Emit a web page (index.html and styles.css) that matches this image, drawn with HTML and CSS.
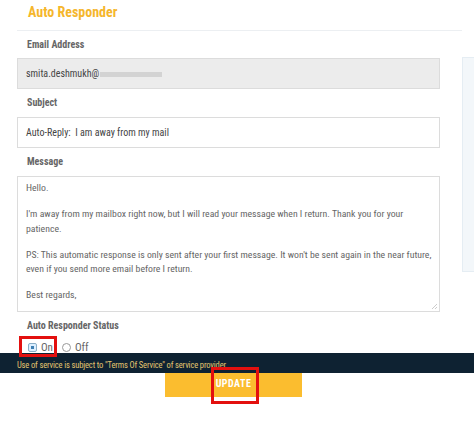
FILE: index.html
```html
<!DOCTYPE html>
<html lang="en">
<head>
    <meta charset="UTF-8">
    <meta name="viewport" content="width=device-width, initial-scale=1.0">
    <title>Auto Responder</title>
    <link rel="stylesheet" href="styles.css">
</head>
<body>
    <div class="page">
        <main class="main-content">
            <h1 class="page-title">Auto Responder</h1>

            <form class="responder-form">
                <div class="field">
                    <label class="field-label">Email Address</label>
                    <div class="text-input readonly">smita.deshmukh@<span class="masked"></span></div>
                </div>

                <div class="field">
                    <label class="field-label">Subject</label>
                    <div class="text-input">Auto-Reply:&nbsp; I am away from my mail</div>
                </div>

                <div class="field">
                    <label class="field-label">Message</label>
                    <div class="text-area">
                        <p>Hello.</p>
                        <p>I'm away from my mailbox right now, but I will read your message when I return. Thank you for your patience.</p>
                        <p>PS: This automatic response is only sent after your first message. It won't be sent again in the near future, even if you send more email before I return.</p>
                        <p>Best regards,</p>
                        <span class="grip"></span>
                    </div>
                </div>

                <div class="field">
                    <label class="field-label">Auto Responder Status</label>
                    <div class="radio-row">
                        <span class="radio checked"></span><span class="radio-text">On</span>
                        <span class="radio"></span><span class="radio-text">Off</span>
                    </div>
                </div>

                <div class="actions">
                    <button type="button" class="update-button">UPDATE</button>
                </div>
            </form>
        </main>
        <aside class="side-panel"></aside>
    </div>

    <footer class="terms-bar">Use of service is subject to "Terms Of Service" of service provider</footer>

    <div class="mark mark-on"></div>
    <div class="mark mark-update"></div>
</body>
</html>
```

FILE: styles.css
```css
body {
    font-family: 'Roboto Condensed', Roboto, 'Liberation Sans', sans-serif;
    font-stretch: condensed;
    margin: 0;
    padding: 0;
    background-color: white;
    color: #555;
    font-size: 10px;
}
.page {
    display: flex;
    align-items: flex-start;
}
.main-content {
    width: 457px;
    padding-left: 17px;
}
.page-title {
    margin: 0;
    height: 30px;
    line-height: 24px;
    padding-left: 11px;
    font-size: 14px;
    font-weight: bold;
    color: #f5b62c;
    border-bottom: 1px solid #eceff2;
}
.responder-form {
    width: 423px;
}
.field-label {
    display: block;
    padding-left: 10px;
    margin: 7px 0;
    line-height: 14px;
    font-weight: bold;
    color: #666;
}
.field:first-child .field-label {
    margin-top: 7px;
    margin-bottom: 6px;
}
.text-input {
    height: 29px;
    line-height: 29px;
    padding: 0 8px;
    border: 1px solid #dcdcdc;
    background-color: white;
    color: #444;
}
.text-input.readonly {
    background-color: #ececec;
}
.masked {
    display: inline-block;
    width: 62px;
    height: 5px;
    margin-left: 1px;
    background-color: #d3d3d3;
    vertical-align: middle;
}
.text-area {
    position: relative;
    height: 124px;
    padding: 4px 3px 6px 8px;
    border: 1px solid #dcdcdc;
    color: #666;
    font-size: 9.75px;
    line-height: 14.5px;
}
.text-area p {
    margin: 0 0 11.5px;
}
.grip {
    position: absolute;
    right: 2px;
    bottom: 2px;
    width: 6px;
    height: 6px;
    background: linear-gradient(135deg, transparent 50%, #ccc 50%, #ccc 60%, transparent 60%, transparent 75%, #ccc 75%, #ccc 85%, transparent 85%);
}
.radio-row {
    display: flex;
    align-items: center;
    gap: 4px;
    padding-left: 11px;
    margin-top: 7px;
    height: 14px;
    color: #666;
    font-size: 11px;
}
.radio {
    width: 7px;
    height: 7px;
    border: 1px solid #999;
    border-radius: 50%;
    background-color: white;
    position: relative;
}
.radio.checked {
    border-radius: 2px;
    border-color: #8aaec7;
    background-color: #dcefff;
}
.radio.checked::after {
    content: '';
    position: absolute;
    left: 2px;
    top: 2px;
    width: 3px;
    height: 3px;
    background-color: #3d7fb3;
}
.radio-text {
    margin-right: 5px;
}
.actions {
    display: flex;
    justify-content: center;
    margin-top: 13px;
}
.update-button {
    width: 137px;
    height: 30px;
    padding-top: 4px;
    border: none;
    background-color: #fbbd2f;
    color: white;
    font-family: inherit;
    font-stretch: condensed;
    font-size: 10px;
    font-weight: bold;
    letter-spacing: 0.5px;
    margin-left: 10px;
}
.side-panel {
    margin-top: 57px;
    width: 11px;
    height: 213px;
    background-color: #f3f7fa;
    border: 1px solid #e5edf3;
    border-right: none;
}
.terms-bar {
    position: absolute;
    left: 0;
    top: 353px;
    width: 457px;
    height: 20px;
    padding-left: 17px;
    background-color: #0e2232;
    color: #e3c56f;
    font-size: 8.5px;
    letter-spacing: -0.15px;
    line-height: 25px;
    white-space: nowrap;
}
.mark {
    position: absolute;
    border: 3px solid #e3100f;
}
.mark-on {
    left: 19px;
    top: 336px;
    width: 32px;
    height: 15px;
}
.mark-update {
    left: 211px;
    top: 367px;
    width: 42px;
    height: 31px;
}
```
